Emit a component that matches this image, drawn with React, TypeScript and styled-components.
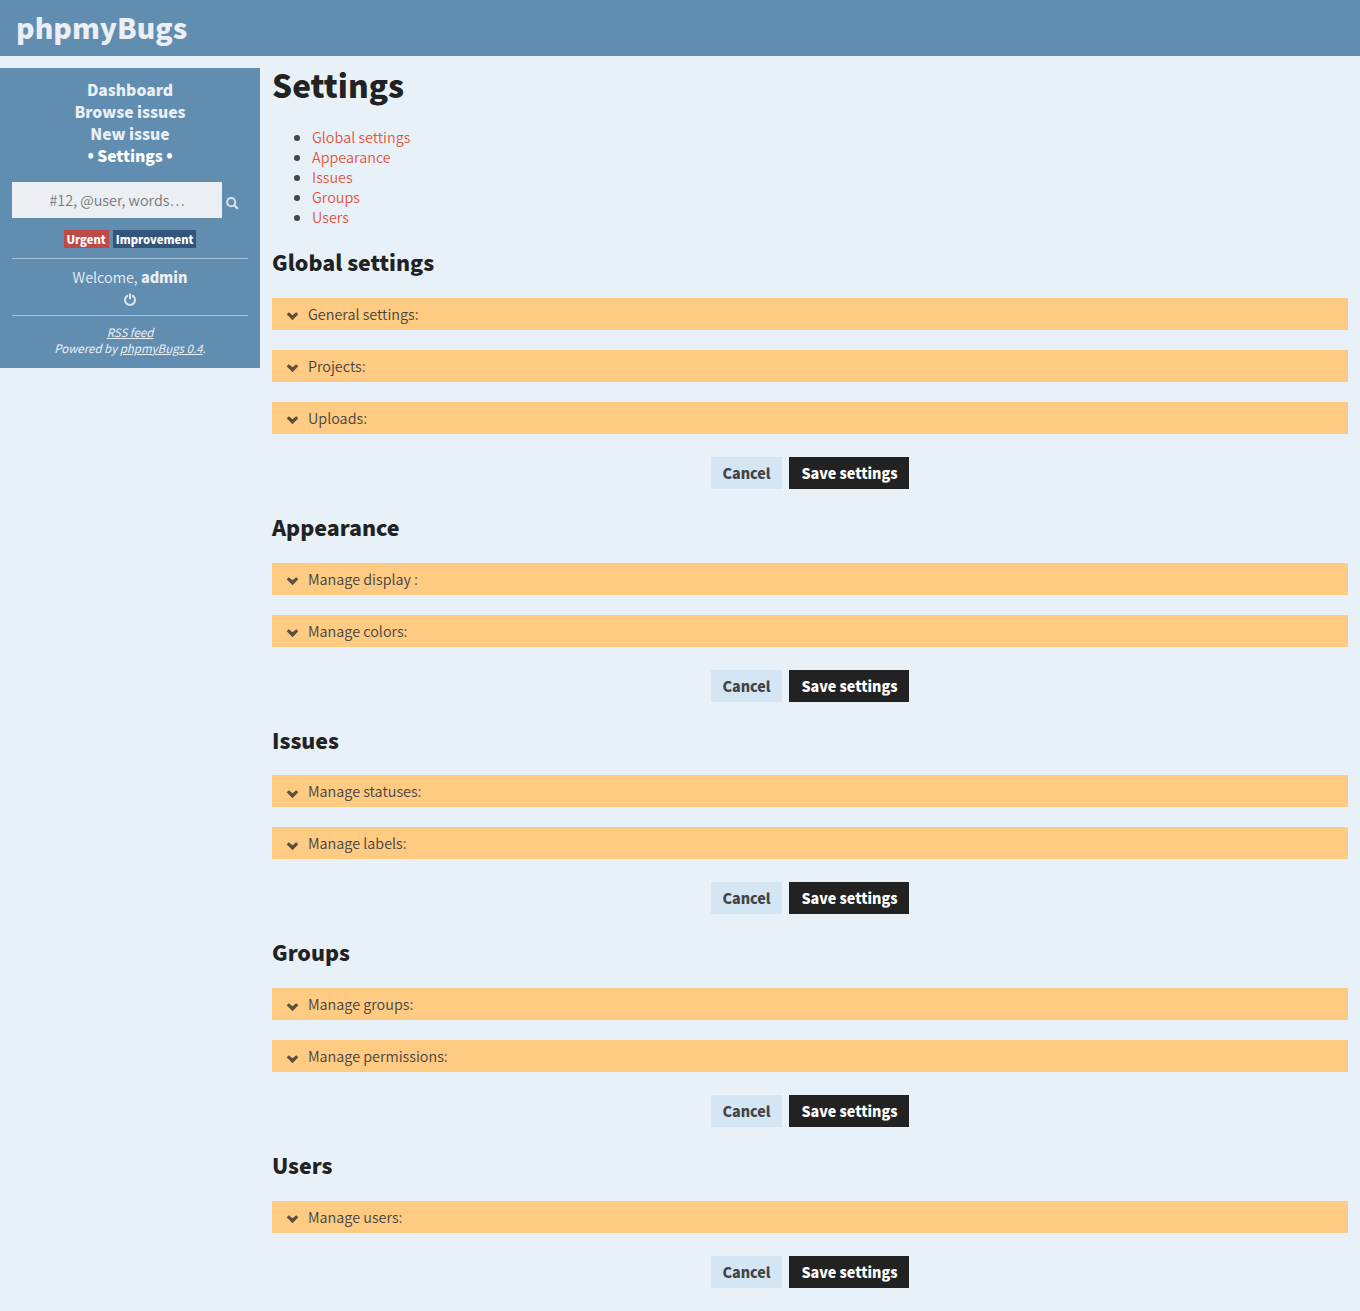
import React from "react";
import styled, { createGlobalStyle } from "styled-components";

const GlobalStyle = createGlobalStyle`
  * { box-sizing: border-box; }
  body {
    margin: 0;
    background: #e9f1f8;
    color: #444;
    font-family: "Noto Sans CJK SC", "Noto Sans", sans-serif;
    font-size: 14.4px;
    font-weight: 350;
    line-height: 20px;
  }
  a { color: inherit; text-decoration: none; }
`;

const Header = styled.header`
  height: 56px;
  padding: 0 16px;
  background: #618db1;
  color: #ebeff3;
  font-size: 28.35px;
  font-weight: 900;
  line-height: 54px;
`;

const Columns = styled.div`
  display: flex;
  align-items: flex-start;
  gap: 12px;
  padding: 12px 12px 0 0;
`;

const Sidebar = styled.aside`
  width: 260px;
  height: 300px;
  padding: 11px 12px 12px;
  background: #618db1;
  color: #ebeff3;
  text-align: center;
`;

const Nav = styled.nav`
  display: flex;
  flex-direction: column;
  font-size: 15.65px;
  font-weight: 900;
  line-height: 22px;
`;

const NavLink = styled.a<{ $active?: boolean }>`
  color: ${(p) => (p.$active ? "#fff" : "#ebeff3")};
`;

const Bullet = styled.span`
  font-family: "Noto Sans", sans-serif;
  font-size: 15px;
  line-height: 1;
`;

const SearchForm = styled.form`
  display: flex;
  align-items: center;
  gap: 4px;
  margin-top: 15px;
`;

const SearchInput = styled.input`
  width: 210px;
  height: 36px;
  padding: 0 12px 2px;
  border: 0;
  background: #ebeff3;
  color: #777;
  font: inherit;
  text-align: center;
  &::placeholder { color: #777; opacity: 1; }
`;

const IconButton = styled.button`
  display: flex;
  margin: 6px 0 0;
  padding: 0;
  border: 0;
  background: none;
`;

const Labels = styled.div`
  display: flex;
  justify-content: center;
  gap: 4px;
  margin-top: 12px;
`;

const Label = styled.a<{ $color: string }>`
  height: 18px;
  padding: 0 3px;
  background: ${(p) => p.$color};
  color: #fff;
  font-size: 11.2px;
  font-weight: 900;
  line-height: 18px;
`;

const Account = styled.div`
  height: 58px;
  margin-top: 10px;
  padding-top: 8px;
  border-top: 1px solid #a6bfd4;
  border-bottom: 1px solid #a6bfd4;
`;

const Strong = styled.b`
  font-weight: 900;
`;

const Logout = styled.div`
  display: flex;
  justify-content: center;
  margin-top: 6px;
`;

const Footer = styled.footer`
  padding-top: 8px;
  font-size: 11.5px;
  font-style: italic;
  font-weight: 400;
  line-height: 16px;
  a { text-decoration: underline; }
`;

const Main = styled.main`
  flex: 1;
  padding-bottom: 23px;
`;

const Title = styled.h1`
  margin: 0;
  color: #222;
  font-size: 31.5px;
  font-weight: 900;
  line-height: 33px;
`;

const Toc = styled.ul`
  margin: 26px 0 0;
  padding-left: 40px;
`;

const TocItem = styled.li`
  a { color: #e0573e; }
`;

const Section = styled.section`
  display: flex;
  flex-direction: column;
  &:first-of-type { margin-top: 20.3px; }
  & + & { margin-top: 23px; }
`;

const SectionTitle = styled.h2`
  margin: 0 0 20.7px;
  color: #222;
  font-size: 21.4px;
  font-weight: 900;
  line-height: 30px;
`;

const Panels = styled.div`
  display: flex;
  flex-direction: column;
  gap: 20px;
`;

const Panel = styled.a`
  display: flex;
  align-items: center;
  gap: 9px;
  height: 32px;
  padding: 0 14px;
  background: #ffca82;
  svg { margin-top: 5px; }
`;

const Actions = styled.div`
  display: flex;
  justify-content: center;
  gap: 7px;
  margin-top: 23px;
`;

const Button = styled.button<{ $primary?: boolean }>`
  width: ${(p) => (p.$primary ? 120 : 71)}px;
  height: 32px;
  padding: ${(p) => (p.$primary ? "0 0 0 1px" : "0")};
  border: 0;
  background: ${(p) => (p.$primary ? "#222" : "#d4e6f4")};
  color: ${(p) => (p.$primary ? "#fff" : "#444")};
  font: inherit;
  font-size: 14.3px;
  font-weight: 900;
`;

const SearchIcon = () => (
  <svg width="13" height="13" viewBox="0 0 13 13" fill="none" stroke="#d9e4ed" strokeWidth="2">
    <circle cx="5.2" cy="5.2" r="4.1" />
    <path d="M8.2 8.2L11.3 11.3" strokeLinecap="round" strokeWidth="2.3" />
  </svg>
);

const PowerIcon = () => (
  <svg width="12" height="13" viewBox="0 0 12 13" fill="none" stroke="#d9e4ed" strokeWidth="2" strokeLinecap="round">
    <path d="M3.2 2.8A5 5 0 1 0 8.8 2.8" />
    <path d="M6 1.2V5.6" />
  </svg>
);

const Chevron = () => (
  <svg width="13" height="10" viewBox="0 0 13 10">
    <path d="M0.7 3.3L2.8 1.2L6.5 4.3L10.2 1.2L12.3 3.3L6.5 9.3Z" fill="#5c503f" />
  </svg>
);

const sections = [
  { title: "Global settings", panels: ["General settings:", "Projects:", "Uploads:"] },
  { title: "Appearance", panels: ["Manage display :", "Manage colors:"] },
  { title: "Issues", panels: ["Manage statuses:", "Manage labels:"] },
  { title: "Groups", panels: ["Manage groups:", "Manage permissions:"] },
  { title: "Users", panels: ["Manage users:"] },
];

export default function App() {
  return (
    <>
      <GlobalStyle />
      <Header>phpmyBugs</Header>
      <Columns>
        <Sidebar>
          <Nav>
            <NavLink>Dashboard</NavLink>
            <NavLink>Browse issues</NavLink>
            <NavLink>New issue</NavLink>
            <NavLink $active><Bullet>•</Bullet> Settings <Bullet>•</Bullet></NavLink>
          </Nav>
          <SearchForm>
            <SearchInput placeholder="#12, @user, words…" />
            <IconButton type="button" aria-label="Search"><SearchIcon /></IconButton>
          </SearchForm>
          <Labels>
            <Label $color="#bd4a48">Urgent</Label>
            <Label $color="#33557b">Improvement</Label>
          </Labels>
          <Account>
            Welcome, <Strong>admin</Strong>
            <Logout><PowerIcon /></Logout>
          </Account>
          <Footer>
            <a>RSS feed</a>
            <br />
            Powered by <a>phpmyBugs 0.4</a>.
          </Footer>
        </Sidebar>
        <Main>
          <Title>Settings</Title>
          <Toc>
            {sections.map((s) => (
              <TocItem key={s.title}><a>{s.title}</a></TocItem>
            ))}
          </Toc>
          {sections.map((s) => (
            <Section key={s.title}>
              <SectionTitle>{s.title}</SectionTitle>
              <Panels>
                {s.panels.map((p) => (
                  <Panel key={p}><Chevron />{p}</Panel>
                ))}
              </Panels>
              <Actions>
                <Button>Cancel</Button>
                <Button $primary>Save settings</Button>
              </Actions>
            </Section>
          ))}
        </Main>
      </Columns>
    </>
  );
}
